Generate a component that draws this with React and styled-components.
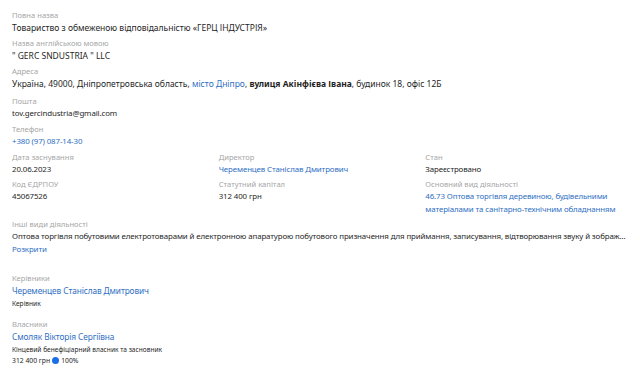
import React from "react";
import styled, { createGlobalStyle } from "styled-components";

const Global = createGlobalStyle`
  html, body { margin: 0; padding: 0; background: #fff; }
  body { font-family: "Noto Sans", "Open Sans", sans-serif; color: #222; }
`;

const Page = styled.div`
  width: 640px;
  box-sizing: border-box;
  padding: 9px 12px 0 12px;
`;

const Section = styled.section`
  display: flex;
  flex-direction: column;
  gap: 3px;
  margin-bottom: ${(p) => p.$after || 0}px;
`;

const Field = styled.div`
  display: flex;
  flex-direction: column;
  min-width: 0;
`;

const Label = styled.div`
  font-size: 7.6px;
  line-height: 12px;
  color: #a6a6a6;
`;

const Value = styled.div`
  font-size: ${(p) => (p.$large ? "8.5px" : "7.9px")};
  letter-spacing: ${(p) => (p.$large ? "0" : "-0.12px")};
  line-height: 13px;
  color: ${(p) => (p.$link ? "#2f6fc4" : "#1f1f1f")};
  white-space: ${(p) => (p.$clip ? "nowrap" : "normal")};
  overflow: ${(p) => (p.$clip ? "hidden" : "visible")};
  text-overflow: ${(p) => (p.$clip ? "ellipsis" : "clip")};
`;

const Link = styled.span`
  color: #2f6fc4;
`;

const Strong = styled.b`
  font-weight: 700;
`;

const Grid = styled.div`
  display: grid;
  grid-template-columns: repeat(3, 1fr);
  column-gap: 4px;
  row-gap: 2px;
  margin-bottom: 2px;
`;

const PersonName = styled.div`
  font-size: 8.3px;
  letter-spacing: -0.1px;
  line-height: 14px;
  color: #2f6fc4;
`;

const Role = styled.div`
  font-size: 6.6px;
  line-height: 11px;
  color: #1f1f1f;
`;

const Share = styled.div`
  display: flex;
  align-items: center;
  gap: 2px;
  font-size: 6.8px;
  line-height: 11px;
  color: #1f1f1f;
`;

const Dot = styled.span`
  width: 7px;
  height: 7px;
  border-radius: 50%;
  background: #1a6fe6;
  display: inline-block;
`;

export default function App() {
  return (
    <>
      <Global />
      <Page>
        <Section $after={5}>
          <Field>
            <Label>Повна назва</Label>
            <Value $large>Товариство з обмеженою відповідальністю «ГЕРЦ ІНДУСТРІЯ»</Value>
          </Field>
          <Field>
            <Label>Назва англійською мовою</Label>
            <Value $large>" GERC SNDUSTRIA " LLC</Value>
          </Field>
          <Field>
            <Label>Адреса</Label>
            <Value $large>
              Україна, 49000, Дніпропетровська область, <Link>місто Дніпро</Link>,{" "}
              <Strong>вулиця Акінфієва Івана</Strong>, будинок 18, офіс 12Б
            </Value>
          </Field>
        </Section>
        <Section $after={3}>
          <Field>
            <Label>Пошта</Label>
            <Value>tov.gercindustria@gmail.com</Value>
          </Field>
          <Field>
            <Label>Телефон</Label>
            <Value $link>+380 (97) 087-14-30</Value>
          </Field>
        </Section>
        <Grid>
          <Field>
            <Label>Дата заснування</Label>
            <Value>20.06.2023</Value>
          </Field>
          <Field>
            <Label>Директор</Label>
            <Value $link>Череменцев Станіслав Дмитрович</Value>
          </Field>
          <Field>
            <Label>Стан</Label>
            <Value>Зареєстровано</Value>
          </Field>
          <Field>
            <Label>Код ЄДРПОУ</Label>
            <Value>45067526</Value>
          </Field>
          <Field>
            <Label>Статутний капітал</Label>
            <Value>312 400 грн</Value>
          </Field>
          <Field>
            <Label>Основний вид діяльності</Label>
            <Value $link>
              46.73 Оптова торгівля деревиною, будівельними матеріалами та санітарно-технічним обладнанням
            </Value>
          </Field>
        </Grid>
        <Section $after={16}>
          <Field>
            <Label>Інші види діяльності</Label>
            <Value $clip>
              Оптова торгівля побутовими електротоварами й електронною апаратурою побутового призначення для приймання, записування, відтворювання звуку й зображення, оптова торгівля іншими товарами
            </Value>
            <Value $link>Розкрити</Value>
          </Field>
        </Section>
        <Section $after={9}>
          <Field>
            <Label>Керівники</Label>
            <PersonName>Череменцев Станіслав Дмитрович</PersonName>
            <Role>Керівник</Role>
          </Field>
        </Section>
        <Section>
          <Field>
            <Label>Власники</Label>
            <PersonName>Смоляк Вікторія Сергіївна</PersonName>
            <Role>Кінцевий бенефіціарний власник та засновник</Role>
            <Share>
              312 400 грн <Dot /> 100%
            </Share>
          </Field>
        </Section>
      </Page>
    </>
  );
}
